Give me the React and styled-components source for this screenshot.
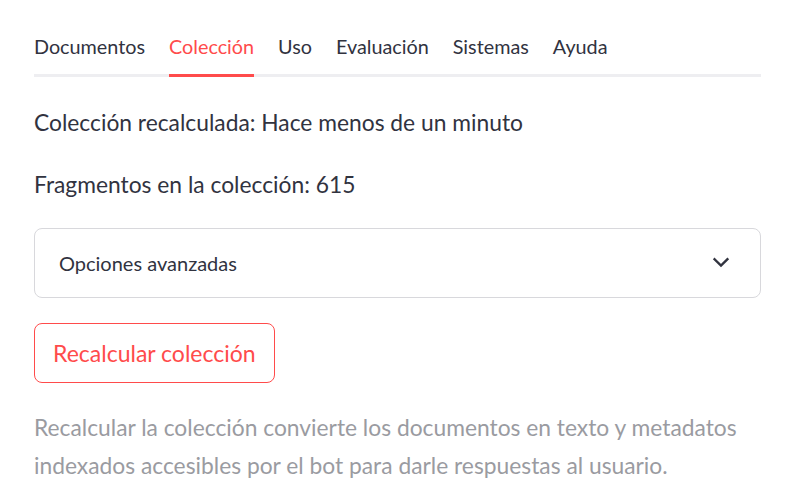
import React from 'react';
import styled, { createGlobalStyle } from 'styled-components';

const TextColor = '#31333F';
const RedColor = '#FF4B4B';
const FontStack = '"Lato", "Noto Sans", sans-serif';

const GlobalStyle = createGlobalStyle`
  html, body {
    margin: 0;
    padding: 0;
    background: #ffffff;
  }
  body {
    font-family: ${FontStack};
    color: ${TextColor};
  }
`;

const Page = styled.div`
  padding: 27px 32px 0 34px;
  width: 727px;
`;

const TabList = styled.div`
  display: flex;
  gap: 24px;
  border-bottom: 3px solid #eeeef1;
`;

const Tab = styled.div`
  position: relative;
  font-size: 19.8px;
  line-height: 38px;
  padding-bottom: 9px;
  color: ${(p) => (p.active ? RedColor : TextColor)};

  &::after {
    content: '';
    display: ${(p) => (p.active ? 'block' : 'none')};
    position: absolute;
    left: 0;
    right: 0;
    bottom: -3px;
    height: 3px;
    background: ${RedColor};
  }
`;

const Body = styled.div`
  display: flex;
  flex-direction: column;
`;

const Info = styled.p`
  margin: 0;
  font-size: 22.8px;
  line-height: 32px;
  margin-top: ${(p) => p.top}px;
`;

const Expander = styled.div`
  margin-top: 28px;
  height: 68px;
  border: 1px solid #d8d8dc;
  border-radius: 8px;
  display: flex;
  align-items: center;
  justify-content: space-between;
  padding: 0 28px 0 24px;
  font-size: 20px;
`;

const Chevron = styled.svg`
  width: 22px;
  height: 22px;
  margin-top: -3px;
`;

const Button = styled.button`
  align-self: flex-start;
  margin-top: 25px;
  height: 60px;
  padding: 0 18px;
  border: 1px solid ${RedColor};
  border-radius: 8px;
  background: #ffffff;
  color: ${RedColor};
  font-family: ${FontStack};
  font-size: 23px;
`;

const Caption = styled.p`
  margin: 25px 0 0;
  font-size: 22.8px;
  line-height: 38px;
  color: #9a9ba1;
`;

const tabs = ['Documentos', 'Colección', 'Uso', 'Evaluación', 'Sistemas', 'Ayuda'];

const App = () => (
  <>
    <GlobalStyle />
    <Page>
      <TabList>
        {tabs.map((t) => (
          <Tab key={t} active={t === 'Colección'}>{t}</Tab>
        ))}
      </TabList>
      <Body>
        <Info top={29}>Colección recalculada: Hace menos de un minuto</Info>
        <Info top={30}>Fragmentos en la colección: 615</Info>
        <Expander>
          <span>Opciones avanzadas</span>
          <Chevron viewBox="0 0 24 24" fill="none" stroke={TextColor} strokeWidth="2.6" strokeLinecap="square" strokeLinejoin="miter">
            <path d="M5 9l7 7 7-7" />
          </Chevron>
        </Expander>
        <Button>Recalcular colección</Button>
        <Caption>
          Recalcular la colección convierte los documentos en texto y metadatos indexados accesibles por el bot para darle respuestas al usuario.
        </Caption>
      </Body>
    </Page>
  </>
);

export default App;
